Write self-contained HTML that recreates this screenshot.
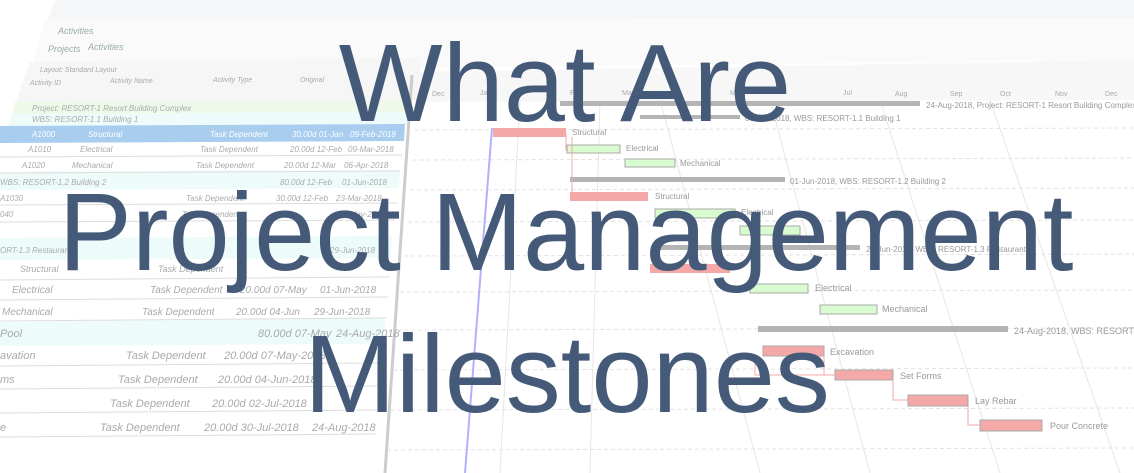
<!DOCTYPE html>
<html><head><meta charset="utf-8"><style>
html,body{margin:0;padding:0;width:1134px;height:473px;overflow:hidden;background:#fff;font-family:"Liberation Sans",sans-serif}
svg{position:absolute;left:0;top:0}
.t{position:absolute;left:0;width:1134px;text-align:center;color:#455a78;font-size:110px;line-height:1;white-space:nowrap}
</style></head><body>
<svg width="1134" height="473" viewBox="0 0 1134 473" font-family="Liberation Sans" font-style="italic" fill="#aaa">
<rect x="0" y="0" width="1134" height="473" fill="#fff"/>
<polygon points="55,0 1134,0 1134,18 48,20" fill="#f4f6f8"/>
<polygon points="45,20 1134,18 1134,60 30,72" fill="#fafafa"/>
<text x="58" y="34" font-size="9" fill="#9aa">Activities</text>
<text x="48" y="52" font-size="9" fill="#9aa">Projects</text>
<text x="88" y="50" font-size="9" fill="#9aa">Activities</text>
<polygon points="30,62 420,58 420,100 15,104" fill="#f6f6f6"/>
<text x="40" y="72" font-size="7">Layout: Standard Layout</text>
<text x="30" y="85" font-size="7">Activity ID</text>
<text x="110" y="83" font-size="7">Activity Name</text>
<text x="213" y="82" font-size="7">Activity Type</text>
<text x="300" y="82" font-size="7">Original</text>
<polygon points="420,72 1134,60 1134,100 415,102" fill="#f7f7f7"/>
<g font-size="7" font-style="normal" fill="#aaa"><text x="432" y="96">Dec</text><text x="480" y="95">Jan</text><text x="570" y="95">Feb</text><text x="622" y="95">Mar</text><text x="730" y="95">May</text><text x="843" y="95">Jul</text><text x="895" y="96">Aug</text><text x="950" y="96">Sep</text><text x="1000" y="96">Oct</text><text x="1055" y="96">Nov</text><text x="1105" y="96">Dec</text></g>
<polygon points="15,102 412,100 410,112 12,114" fill="#eef9ea"/>
<polygon points="12,114 410,112 409,125 8,127" fill="#eefbfb"/>
<polygon points="0,126 405,124 404,141 0,143" fill="#a9cdef"/>
<polygon points="0,172 400,170 399,188 0,190" fill="#eefbfb"/>
<polygon points="0,238 392,236 391,258 0,260" fill="#eefbfb"/>
<polygon points="0,322 385,318 384,344 0,346" fill="#eefbfb"/>
<g stroke="#ddd" stroke-width="1">
<line x1="0" y1="157" x2="402" y2="155"/><line x1="0" y1="173" x2="400" y2="171"/>
<line x1="0" y1="205" x2="397" y2="203"/><line x1="0" y1="222" x2="395" y2="220"/>
<line x1="0" y1="280" x2="390" y2="277"/><line x1="0" y1="300" x2="388" y2="297"/>
<line x1="0" y1="321" x2="386" y2="318"/><line x1="0" y1="366" x2="382" y2="363"/>
<line x1="0" y1="389" x2="380" y2="386"/><line x1="0" y1="413" x2="378" y2="410"/>
<line x1="0" y1="437" x2="376" y2="434"/>
</g>
<line x1="412" y1="75" x2="385" y2="473" stroke="#ccc" stroke-width="3"/>
<g font-size="8">
<text x="32" y="111">Project: RESORT-1 Resort Building Complex</text>
<text x="32" y="122">WBS: RESORT-1.1 Building 1</text>
<text x="32" y="137" fill="#fff">A1000</text><text x="88" y="137" fill="#fff">Structural</text><text x="210" y="137" fill="#fff">Task Dependent</text><text x="292" y="137" fill="#fff">30.00d 01-Jan</text><text x="350" y="137" fill="#fff">09-Feb-2018</text>
<text x="28" y="152">A1010</text><text x="80" y="152">Electrical</text><text x="200" y="152">Task Dependent</text><text x="290" y="152">20.00d 12-Feb</text><text x="348" y="152">09-Mar-2018</text>
<text x="22" y="168">A1020</text><text x="72" y="168">Mechanical</text><text x="196" y="168">Task Dependent</text><text x="284" y="168">20.00d 12-Mar</text><text x="344" y="168">06-Apr-2018</text>
<text x="0" y="185">WBS: RESORT-1.2 Building 2</text><text x="280" y="185">80.00d 12-Feb</text><text x="342" y="185">01-Jun-2018</text>
<text x="0" y="201">A1030</text><text x="186" y="201">Task Dependent</text><text x="276" y="201">30.00d 12-Feb</text><text x="336" y="201">23-Mar-2018</text>
<text x="0" y="217">040</text><text x="182" y="217">Task Dependent</text><text x="338" y="217">04-May-2018</text>
<text x="0" y="253">ORT-1.3 Restaurant</text><text x="330" y="253">29-Jun-2018</text>
<text x="20" y="272" font-size="9">Structural</text><text x="158" y="272" font-size="9">Task Dependent</text>
<text x="12" y="293" font-size="10">Electrical</text><text x="150" y="293" font-size="10">Task Dependent</text><text x="240" y="293" font-size="10">20.00d 07-May</text><text x="320" y="293" font-size="10">01-Jun-2018</text>
<text x="2" y="315" font-size="10">Mechanical</text><text x="142" y="315" font-size="10">Task Dependent</text><text x="236" y="315" font-size="10">20.00d 04-Jun</text><text x="314" y="315" font-size="10">29-Jun-2018</text>
<text x="0" y="337" font-size="11">Pool</text><text x="258" y="337" font-size="11">80.00d 07-May</text><text x="336" y="337" font-size="11">24-Aug-2018</text>
<text x="0" y="359" font-size="11">avation</text><text x="126" y="359" font-size="11">Task Dependent</text><text x="224" y="359" font-size="11">20.00d 07-May-2018</text>
<text x="0" y="383" font-size="11">ms</text><text x="118" y="383" font-size="11">Task Dependent</text><text x="218" y="383" font-size="11">20.00d 04-Jun-2018</text>
<text x="110" y="407" font-size="11">Task Dependent</text><text x="212" y="407" font-size="11">20.00d 02-Jul-2018</text>
<text x="0" y="431" font-size="11">e</text><text x="100" y="431" font-size="11">Task Dependent</text><text x="204" y="431" font-size="11">20.00d 30-Jul-2018</text><text x="312" y="431" font-size="11">24-Aug-2018</text>
</g>
<g stroke="#e2e2e2" stroke-dasharray="4,3">
<line x1="415" y1="130" x2="1134" y2="128"/><line x1="413" y1="160" x2="1134" y2="158"/><line x1="410" y1="190" x2="1134" y2="188"/><line x1="408" y1="222" x2="1134" y2="220"/><line x1="404" y1="256" x2="1134" y2="254"/><line x1="400" y1="292" x2="1134" y2="290"/><line x1="397" y1="330" x2="1134" y2="328"/><line x1="393" y1="370" x2="1134" y2="368"/><line x1="390" y1="410" x2="1134" y2="408"/><line x1="387" y1="450" x2="1134" y2="448"/>
</g>
<g stroke="#e6e6e6">
<line x1="520" y1="100" x2="500" y2="473"/><line x1="600" y1="100" x2="590" y2="473"/><line x1="660" y1="100" x2="760" y2="473"/><line x1="770" y1="100" x2="870" y2="473"/><line x1="880" y1="100" x2="1000" y2="473"/><line x1="990" y1="100" x2="1120" y2="473"/>
</g>
<line x1="492" y1="128" x2="465" y2="473" stroke="#b0b0ff" stroke-width="2"/>
<g font-size="8" font-style="normal" fill="#999">
<rect x="560" y="101" width="360" height="5" fill="#b4b4b4"/><text x="926" y="108">24-Aug-2018, Project: RESORT-1 Resort Building Complex</text>
<rect x="640" y="115" width="100" height="4" fill="#b4b4b4"/><text x="745" y="121">06-Apr-2018, WBS: RESORT-1.1 Building 1</text>
<rect x="493" y="128" width="73" height="9" fill="#f4a8a8"/><text x="572" y="135">Structural</text>
<rect x="567" y="145" width="53" height="8" fill="#d8fbd0" stroke="#aaa"/><text x="626" y="151">Electrical</text>
<rect x="625" y="159" width="50" height="8" fill="#d8fbd0" stroke="#aaa"/><text x="680" y="166">Mechanical</text>
<rect x="570" y="177" width="215" height="5" fill="#b4b4b4"/><text x="790" y="184">01-Jun-2018, WBS: RESORT-1.2 Building 2</text>
<rect x="570" y="192" width="78" height="9" fill="#f4a8a8"/><text x="655" y="199">Structural</text>
<rect x="655" y="209" width="80" height="9" fill="#d8fbd0" stroke="#aaa"/><text x="741" y="215">Electrical</text>
<rect x="740" y="226" width="60" height="9" fill="#d8fbd0" stroke="#aaa"/>
<rect x="660" y="245" width="200" height="5" fill="#b4b4b4"/><text x="866" y="252">29-Jun-2018, WBS: RESORT-1.3 Restaurant</text>
<rect x="650" y="264" width="80" height="9" fill="#f4a8a8"/>
<rect x="750" y="284" width="58" height="9" fill="#d8fbd0" stroke="#aaa"/><text x="815" y="291" font-size="9">Electrical</text>
<rect x="820" y="305" width="57" height="9" fill="#d8fbd0" stroke="#aaa"/><text x="882" y="312" font-size="9">Mechanical</text>
<rect x="758" y="326" width="250" height="6" fill="#b4b4b4"/><text x="1014" y="334" font-size="9">24-Aug-2018, WBS: RESORT-1.4 Pool</text>
<rect x="763" y="346" width="61" height="10" fill="#f4a8a8" stroke="#aaa"/><text x="830" y="355" font-size="9">Excavation</text>
<rect x="835" y="370" width="58" height="10" fill="#f4a8a8" stroke="#aaa"/><text x="900" y="379" font-size="9">Set Forms</text>
<rect x="908" y="395" width="60" height="11" fill="#f4a8a8" stroke="#aaa"/><text x="975" y="404" font-size="9">Lay Rebar</text>
<rect x="980" y="420" width="62" height="11" fill="#f4a8a8" stroke="#aaa"/><text x="1050" y="429" font-size="9">Pour Concrete</text>
</g>
<g stroke="#f4a8a8" fill="none"><path d="M566,133 V150 H567"/><path d="M572,137 V197"/><path d="M755,355 V375 H835"/><path d="M824,356 V375"/><path d="M893,380 V400 H908"/><path d="M968,406 V425 H980"/></g>
</svg>
<div class="t" style="top:29px;left:-2px">What Are</div>
<div class="t" style="top:178px;left:-1px">Project Management</div>
<div class="t" style="top:320px;left:0">Milestones</div>
</body></html>
